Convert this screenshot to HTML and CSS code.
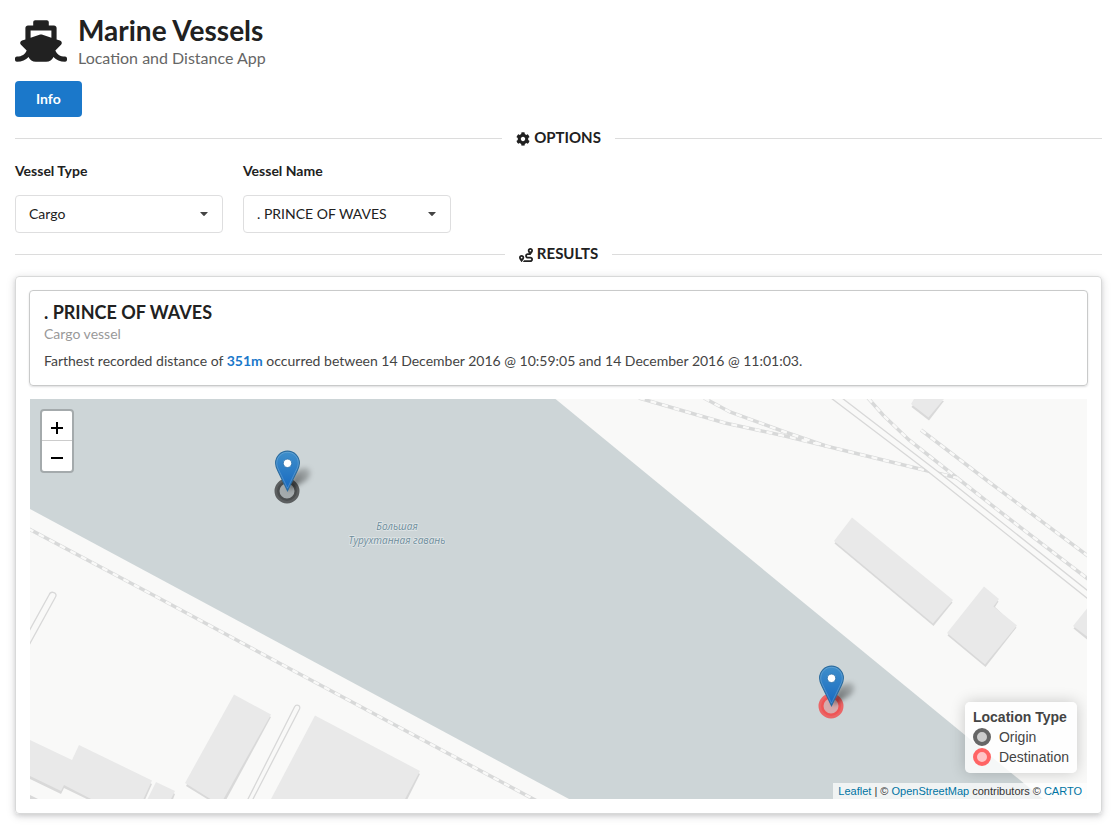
FILE: index.html
```html
<!DOCTYPE html>
<html lang="en">
<head>
<meta charset="utf-8">
<title>Marine Vessels</title>
<meta name="viewport" content="width=device-width, initial-scale=1">
<link rel="stylesheet" href="styles.css">
</head>
<body>
<main class="page">
  <header class="app-header">
    <svg class="app-logo" viewBox="0 0 640 512" aria-hidden="true"><path d="M496.616 372.639l70.012-70.012c16.899-16.9 9.942-45.771-12.836-53.092L512 236.102V96c0-17.673-14.327-32-32-32h-64V24c0-13.255-10.745-24-24-24H248c-13.255 0-24 10.745-24 24v40h-64c-17.673 0-32 14.327-32 32v140.102l-41.792 13.433c-22.753 7.313-29.754 36.173-12.836 53.092l70.012 70.012C125.828 416.287 85.587 448 24 448c-13.255 0-24 10.745-24 24v16c0 13.255 10.745 24 24 24 61.023 0 107.499-20.61 143.258-59.396C181.677 487.432 216.021 512 256 512h128c39.979 0 74.323-24.568 88.742-59.396C508.495 491.384 554.968 512 616 512c13.255 0 24-10.745 24-24v-16c0-13.255-10.745-24-24-24-60.817 0-101.542-31.001-119.384-75.361zM192 128h256v87.531l-118.208-37.995a31.995 31.995 0 0 0-19.584 0L192 215.531V128z"/></svg>
    <div>
      <h1 class="app-title">Marine Vessels</h1>
      <p class="app-subtitle">Location and Distance App</p>
    </div>
  </header>

  <button class="info-button" type="button">Info</button>

  <h2 class="divider">
    <svg class="divider-icon" viewBox="0 0 512 512" aria-hidden="true"><path d="M487.4 315.7l-42.6-24.6c4.3-23.2 4.3-47 0-70.2l42.6-24.6c4.9-2.8 7.1-8.6 5.5-14-11.1-35.6-30-67.8-54.7-94.6-3.8-4.1-10-5.1-14.8-2.3L380.8 110c-17.9-15.4-38.5-27.3-60.8-35.1V25.8c0-5.6-3.9-10.5-9.4-11.7-36.7-8.2-74.3-7.8-109.2 0-5.5 1.2-9.4 6.1-9.4 11.7V75c-22.2 7.9-42.8 19.8-60.8 35.1L88.7 85.5c-4.9-2.8-11-1.9-14.8 2.3-24.7 26.7-43.6 58.9-54.7 94.6-1.7 5.4.6 11.2 5.5 14L67.3 221c-4.3 23.2-4.3 47 0 70.2l-42.6 24.6c-4.9 2.8-7.1 8.6-5.5 14 11.1 35.6 30 67.8 54.7 94.6 3.8 4.1 10 5.1 14.8 2.3l42.6-24.6c17.9 15.4 38.5 27.3 60.8 35.1v49.2c0 5.6 3.9 10.5 9.4 11.7 36.7 8.2 74.3 7.8 109.2 0 5.5-1.2 9.4-6.1 9.4-11.7v-49.2c22.2-7.9 42.8-19.8 60.8-35.1l42.6 24.6c4.9 2.8 11 1.9 14.8-2.3 24.7-26.7 43.6-58.9 54.7-94.6 1.5-5.5-.7-11.3-5.6-14.1zM256 336c-44.1 0-80-35.9-80-80s35.9-80 80-80 80 35.9 80 80-35.9 80-80 80z"/></svg>
    <span>OPTIONS</span>
  </h2>

  <form class="options">
    <div class="field">
      <label for="vessel-type">Vessel Type</label>
      <div class="dropdown">
        <select id="vessel-type"><option>Cargo</option></select>
        <svg class="caret" viewBox="0 0 8 4" aria-hidden="true"><path d="M.6 0h6.8q.7 0 .2.6L4.500 3.700q-.5.5-1 0L.4.600Q-.1 0 .6 0z"/></svg>
      </div>
    </div>
    <div class="field">
      <label for="vessel-name">Vessel Name</label>
      <div class="dropdown">
        <select id="vessel-name"><option>. PRINCE OF WAVES</option></select>
        <svg class="caret" viewBox="0 0 8 4" aria-hidden="true"><path d="M.6 0h6.8q.7 0 .2.6L4.500 3.700q-.5.5-1 0L.4.600Q-.1 0 .6 0z"/></svg>
      </div>
    </div>
  </form>

  <h2 class="divider">
    <svg class="divider-icon" viewBox="0 0 512 512" aria-hidden="true"><path d="M416 320h-96c-17.6 0-32-14.4-32-32s14.400-32 32-32h96s96-107 96-160-43-96-96-96-96 43-96 96c0 25.500 22.200 63.400 45.300 96H320c-52.900 0-96 43.100-96 96s43.100 96 96 96h96c17.600 0 32 14.400 32 32s-14.400 32-32 32H185.500c-16 24.800-33.800 47.700-47.300 64H416c52.900 0 96-43.100 96-96s-43.100-96-96-96zm0-256c17.700 0 32 14.300 32 32s-14.300 32-32 32-32-14.300-32-32 14.300-32 32-32zM96 256c-53 0-96 43-96 96s96 160 96 160 96-107 96-160-43-96-96-96zm0 128c-17.700 0-32-14.300-32-32s14.300-32 32-32 32 14.300 32 32-14.300 32-32 32z"/></svg>
    <span>RESULTS</span>
  </h2>

  <section class="results">
    <article class="card">
      <h3 class="card-title">. PRINCE OF WAVES</h3>
      <p class="card-meta">Cargo vessel</p>
      <p class="card-text">Farthest recorded distance of <b>351m</b> occurred between 14 December 2016 @ 10:59:05 and 14 December 2016 @ 11:01:03.</p>
    </article>

    <div class="map">
      <svg class="map-canvas" viewBox="30 399 1057 400" preserveAspectRatio="xMidYMid slice" role="img" aria-label="Map of the vessel route">
        <defs>
          <linearGradient id="pin-fill" x1="0" y1="0" x2="0" y2="1">
            <stop offset="0" stop-color="#3f8fcb"/><stop offset="1" stop-color="#1668c0"/>
          </linearGradient>
          <linearGradient id="pin-shade" x1="0" y1="1" x2="1" y2="0">
            <stop offset="0" stop-color="#000" stop-opacity=".6"/><stop offset="1" stop-color="#000" stop-opacity=".12"/>
          </linearGradient>
          <filter id="soft" x="-40%" y="-40%" width="180%" height="180%"><feGaussianBlur stdDeviation="2.500"/></filter>
          <g id="pin">
            <path d="M13 40L19 24Q26 15 34 18Q38 24 31 30Z" fill="url(#pin-shade)" filter="url(#soft)"/>
            <path d="M12.500.6C5.900.600.600 5.900.600 12.600c0 2.600.9 5 2.100 7.300L12.500 40.300l9.800-20.400c1.200-2.300 2.100-4.700 2.100-7.300C24.400 5.900 19.100.600 12.500.600z" fill="url(#pin-fill)" stroke="#2b6c9f" stroke-width="1.100"/>
            <path d="M12.500 1.700C6.500 1.700 1.700 6.500 1.700 12.600c0 2.400.8 4.600 2 6.900L12.500 37.800l8.800-18.300c1.200-2.300 2-4.500 2-6.900 0-6.100-4.800-10.900-10.800-10.900z" fill="none" stroke="#fff" stroke-opacity=".18"/>
            <circle cx="12.500" cy="12.800" r="4.200" fill="#fff" stroke="#2b6fa8" stroke-width=".8"/>
          </g>
        </defs>
        <rect class="land" x="30" y="399" width="1057" height="400"/>
        <path class="water" d="M30 399H555.500L1043 799H569L30 509Z"/>

        <g class="building-side">
          <path d="M30 743L72 763 79 748 152 784 144 802H93L64 788 61 794 30 779Z"/>
          <path d="M156 784L175 794 172 802H148Z"/>
          <path d="M234 698L271 717 225 802H212L186 786Z"/>
          <path d="M315 718L420 774 406 802H273Z"/>
          <path d="M30 795L38 799H30Z"/>
          <path d="M916 401H944L929 420.500 911.500 407Z"/>
          <path d="M852 520.500L952.500 602.500 933.500 626 834.500 543.500Z"/>
          <path d="M984 589.500L998.500 601.500 995 607 1016.500 627.500 985.500 667 947.500 635.500Z"/>
          <path d="M1087 612L1073.500 628.500 1087 639.500Z"/>
        </g>
        <g class="building">
          <path d="M30 740L72 760 79 745 152 780.500 143 800H93L64 785 61 791 30 776Z"/>
          <path d="M156 782L175 791 170.500 800H147Z"/>
          <path d="M234 694.500L271 714.500 223 800H212L185 783Z"/>
          <path d="M315 715.500L420 771 404.500 800H270.500Z"/>
          <path d="M914 399H944L928.500 417.500 911 404Z"/>
          <path d="M852 517.500L953 600 933 623.500 834 541Z"/>
          <path d="M984 586.500L999 599 993.500 606.500 1017 625.500 985 664.500 947 633Z"/>
          <path d="M1087 608.500L1073 626 1087 636.500Z"/>
        </g>

        <g class="road">
          <path d="M28 633L49 595C51 590 58 593 55.500 597L28 647"/>
          <path d="M247 801L294.500 707C296 704 301 705 299.500 709L252 801"/>
        </g>
        <g class="rail">
          <path d="M28 528.500L155 596 280 663.500 537 801"/>
          <path d="M639 398L725 423 785 436 924 470 958 478"/>
          <path d="M704 398L730 412 785 432 826 446"/>
          <path d="M868 398L883 415 909 440 956 477 1003 514 1088 579"/>
          <path d="M921 430L989 482 1088 556"/>
        </g>
        <g class="rail-gap">
          <path d="M28 528.500L155 596 280 663.500 537 801"/>
          <path d="M639 398L725 423 785 436 924 470 958 478"/>
          <path d="M704 398L730 412 785 432 826 446"/>
          <path d="M868 398L883 415 909 440 956 477 1003 514 1088 579"/>
          <path d="M921 430L989 482 1088 556"/>
        </g>
        <path class="land" d="M832 398L926 470 1087 598V590L941 474 843 398Z"/>
        <g class="road">
          <path d="M831 398L926 470 1088 599"/>
          <path d="M842 398L941 474 1088 591"/>
        </g>

        <g class="place">
          <text x="397" y="530">Большая</text>
          <text x="397" y="544">Турухтанная гавань</text>
        </g>

        <circle class="spot origin" cx="287" cy="491" r="10"/>
        <circle class="spot destination" cx="831" cy="706" r="10"/>
        <use href="#pin" x="275" y="450.500"/>
        <use href="#pin" x="819" y="665.500"/>
      </svg>

      <div class="zoom-control">
        <button type="button" aria-label="Zoom in"><svg viewBox="0 0 12 12" aria-hidden="true"><path d="M0 6h12M6 0v12"/></svg></button>
        <button type="button" aria-label="Zoom out"><svg viewBox="0 0 12 12" aria-hidden="true"><path d="M0 6h12"/></svg></button>
      </div>

      <div class="map-corner">
        <div class="legend">
          <strong>Location Type</strong>
          <ul>
            <li><i class="dot dot-origin"></i>Origin</li>
            <li><i class="dot dot-destination"></i>Destination</li>
          </ul>
        </div>
        <div class="attribution"><a href="#">Leaflet</a> | © <a href="#">OpenStreetMap</a> contributors © <a href="#">CARTO</a></div>
      </div>
    </div>
  </section>
</main>
</body>
</html>
```

FILE: styles.css
```css
* { box-sizing: border-box; }

body {
  margin: 0;
  background: #fff;
  color: #212121;
  font: 14px/20px Lato, "Liberation Sans", sans-serif;
}

h1, h2, h3, p, ul { margin: 0; padding: 0; }

.page { padding: 13px 14px 13px 15px; }

.app-header {
  display: flex;
  align-items: center;
  gap: 11px;
}

.app-logo {
  width: 52px;
  height: 42px;
  fill: #212121;
}

.app-title {
  font-size: 28px;
  line-height: 34px;
  font-weight: 700;
}

.app-subtitle {
  padding-top: 1px;
  font-size: 16px;
  line-height: 20px;
  color: #666;
}

.info-button {
  display: block;
  margin-top: 13px;
  padding: 0 21px;
  height: 36px;
  border: 0;
  border-radius: 4px;
  background: #1b78ca;
  color: #fff;
  font: 700 14px/20px Lato, sans-serif;
}

.divider {
  display: flex;
  align-items: center;
  margin-top: 10px;
  font-size: 15px;
  line-height: 20px;
  font-weight: 700;
}

.divider::before,
.divider::after {
  content: "";
  flex: 1;
  height: 1px;
  margin-top: 3px;
  background: #dcdcdc;
}

.divider::before { margin-right: 14px; }
.divider::after { margin-left: 14px; }

.divider-icon {
  width: 14px;
  height: 14px;
  margin: 4px 4px 0 0;
  fill: #212121;
}

.options {
  display: flex;
  gap: 20px;
  margin-top: 14px;
}

.field {
  display: flex;
  flex-direction: column;
  gap: 14px;
}

.field label { font-weight: 700; }

.dropdown {
  display: grid;
  align-items: center;
  width: 208px;
}

.dropdown > * { grid-area: 1 / 1; }

.dropdown select {
  appearance: none;
  width: 100%;
  height: 38px;
  padding: 0 32px 0 13px;
  border: 1px solid #dededf;
  border-radius: 4px;
  background: #fff;
  color: #212121;
  font: 14px/20px Lato, sans-serif;
}

.caret {
  justify-self: end;
  width: 8px;
  height: 4px;
  margin-right: 15px;
  fill: #444;
  pointer-events: none;
}

.results {
  margin-top: 13px;
  padding: 13px 14px 14px;
  border: 1px solid #d8d9d9;
  border-radius: 4px;
  box-shadow: 0 2px 4px rgba(34, 36, 38, .12), 0 2px 10px rgba(34, 36, 38, .15);
}

.card {
  margin: 0 -1px;
  padding: 10px 14px 14px;
  border: 1px solid #c9caca;
  border-radius: 4px;
  box-shadow: 0 1px 2px rgba(34, 36, 38, .15);
}

.card-title {
  font-size: 18px;
  line-height: 22px;
  font-weight: 700;
}

.card-meta { color: #999; margin-top: 1px; }

.card-text { color: #444; margin-top: 7px; }

.card-text b { color: #1b78ca; }

.map {
  position: relative;
  height: 400px;
  margin-top: 13px;
  overflow: hidden;
}

.map-canvas {
  display: block;
  width: 100%;
  height: 100%;
}

.land { fill: #f9f9f8; }
.water { fill: #cdd5d7; }
.building { fill: #e9e9e9; }
.building-side { fill: #d9d9d9; }

.road {
  fill: none;
  stroke: #d8d8d8;
  stroke-width: 1.3;
}

.rail {
  fill: none;
  stroke: #d8d9d9;
  stroke-width: 3.5;
}

.rail-gap {
  fill: none;
  stroke: #f9f9f8;
  stroke-width: 2.4;
  stroke-dasharray: 6 6;
}

.place {
  fill: #6d8c9a;
  stroke: #e0e6e8;
  stroke-width: 1.5;
  paint-order: stroke;
  font: italic 10px "Open Sans", "Noto Sans", sans-serif;
  text-anchor: middle;
}

.spot { stroke-width: 5; stroke-opacity: .6; fill-opacity: .2; }
.origin { fill: #000; stroke: #111; }
.destination { fill: #ff0000; stroke: #ff1a1a; }

.zoom-control {
  position: absolute;
  top: 10px;
  left: 10px;
  width: 34px;
  border: 2px solid #a4aaac;
  border-radius: 4px;
  background: #fff;
}

.zoom-control button {
  display: grid;
  place-items: center;
  width: 100%;
  height: 29px;
  padding: 5px 0 0;
  border: 0;
  background: none;
}

.zoom-control button + button {
  height: 31px;
  padding-top: 4px;
  border-top: 1px solid #ccc;
}

.zoom-control svg {
  width: 12px;
  height: 12px;
  stroke: #000;
  stroke-width: 2;
}

.map-corner {
  position: absolute;
  right: 0;
  bottom: 0;
  display: flex;
  flex-direction: column;
  align-items: flex-end;
  gap: 10px;
  font-family: "Liberation Sans", Arial, sans-serif;
}

.legend {
  margin-right: 10px;
  padding: 5px 8px 6px;
  border-radius: 5px;
  background: rgba(255, 255, 255, .8);
  box-shadow: 0 0 15px rgba(0, 0, 0, .2);
  color: #444;
  font-size: 14px;
  line-height: 20px;
}

.legend strong { display: block; }

.legend ul { list-style: none; }

.legend li {
  display: flex;
  align-items: center;
  gap: 8px;
}

.dot {
  width: 18px;
  height: 18px;
  border: 4px solid #666;
  border-radius: 50%;
  background: #ccc;
}

.dot-destination {
  border-color: #ff6464;
  background: #ffc4c6;
}

.attribution {
  padding: 0 5px;
  background: rgba(255, 255, 255, .7);
  color: #333;
  font-size: 11px;
  line-height: 16px;
}

.attribution a {
  color: #0074a3;
  text-decoration: none;
}
```
